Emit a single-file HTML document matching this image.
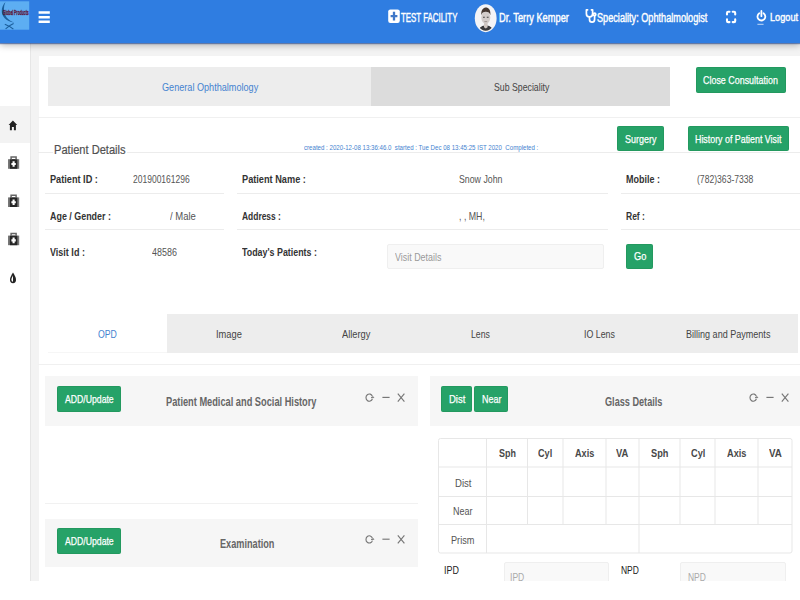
<!DOCTYPE html>
<html lang="en"><head><meta charset="utf-8"><title>Patient Consultation</title>
<style>
*{box-sizing:border-box;margin:0;padding:0}
html,body{width:800px;height:600px;overflow:hidden;background:#f3f3f3;font-family:"Liberation Sans",sans-serif}
.a{position:absolute}
.t{position:absolute;z-index:3;white-space:pre;line-height:1;transform-origin:0 50%;font-family:"Liberation Sans",sans-serif}
.hdr{left:0;top:0;width:800px;height:43px;background:#2f7de1;box-shadow:0 1px 1px rgba(20,60,140,.55),0 2px 7px rgba(0,0,0,.30);z-index:2}
.side{left:0;top:43px;width:30.5px;height:540px;background:#fff;border-right:1px solid #e6e6e6}
.side .act{left:0;top:63px;width:29.5px;height:37px;background:#f3f3f3}
.card{left:38.5px;top:55.5px;width:762px;height:530px;background:#fff}
.hl{height:1px;background:#ececec}
.btn{background:#26a268;border:1px solid #23995f;border-radius:1.5px}
.tab{background:#ededed}
.ph{background:#f6f6f6}
.inp{background:#f9f9f9;border:1px solid #efefef;border-radius:2px}
.cut{position:absolute;left:0;top:580.5px;width:800px;height:20px;background:#fff;z-index:5}
svg{position:absolute;overflow:visible}
.hw{-webkit-text-stroke:.4px #fff}
.bw{-webkit-text-stroke:.25px #fff}
.pd{-webkit-text-stroke:.2px #505050}

</style></head>
<body>
<div class="a side"><div class="a act"></div></div>
<div class="a card"></div>
<div class="a hdr"></div>

<!-- main tabs -->
<div class="a tab" style="left:48px;top:67px;width:323px;height:38.5px"></div>
<div class="a" style="left:371px;top:67px;width:299px;height:38.5px;background:#dcdcdc"></div>
<div class="a btn" style="left:695.5px;top:66.5px;width:90px;height:26px"></div>
<div class="a hl" style="left:38px;top:117px;width:762px;background:#f0f0f0"></div>

<!-- patient details -->
<div class="a btn" style="left:617px;top:125.5px;width:47px;height:25.5px"></div>
<div class="a btn" style="left:687.5px;top:125.5px;width:101.5px;height:25.5px"></div>
<div class="a hl" style="left:38px;top:152px;width:762px"></div>
<div class="a" style="left:52.5px;top:150px;width:74px;height:5px;background:#fff"></div>
<div class="a hl" style="left:45px;top:193px;width:179px"></div>
<div class="a hl" style="left:237px;top:193px;width:371px"></div>
<div class="a hl" style="left:621px;top:193px;width:179px"></div>
<div class="a hl" style="left:45px;top:229px;width:179px"></div>
<div class="a hl" style="left:237px;top:229px;width:371px"></div>
<div class="a hl" style="left:621px;top:229px;width:179px"></div>
<div class="a inp" style="left:387px;top:243.5px;width:217px;height:25.5px"></div>
<div class="a btn" style="left:625.5px;top:243.5px;width:27.5px;height:25.5px"></div>

<!-- section tabs -->
<div class="a tab" style="left:166.5px;top:314px;width:631px;height:38.5px"></div>
<div class="a hl" style="left:48px;top:352px;width:119px;background:#f6f6f6"></div>
<div class="a hl" style="left:38px;top:364px;width:762px;background:#f0f0f0"></div>

<!-- panels -->
<div class="a ph" style="left:44.5px;top:376px;width:373px;height:49.5px"></div>
<div class="a btn" style="left:57px;top:385.5px;width:64px;height:26.5px"></div>
<div class="a hl" style="left:44.5px;top:503px;width:373px;background:#f1f1f1"></div>
<div class="a ph" style="left:44.5px;top:518.5px;width:373px;height:48.5px"></div>
<div class="a btn" style="left:57px;top:527.5px;width:64px;height:26px"></div>

<div class="a ph" style="left:430px;top:376px;width:370px;height:49.5px"></div>
<div class="a btn" style="left:441px;top:385.5px;width:31px;height:26.5px"></div>
<div class="a btn" style="left:474px;top:385.5px;width:34px;height:26.5px"></div>

<!-- glass table grid -->
<svg class="ov" style="left:0;top:0;z-index:1" width="800" height="600" viewBox="0 0 800 600" fill="none" stroke="#e7e7e7" stroke-width="1">
<rect x="438.5" y="438.5" width="353.5" height="114.5" rx="2"/>
<path d="M438.5 467H792M438.5 496.5H792M438.5 524.5H792"/>
<path d="M486.5 438.5V553M639 438.5V553"/>
<path d="M527.5 438.5V524.5M563 438.5V524.5M606 438.5V524.5M680 438.5V524.5M715 438.5V524.5M758 438.5V524.5"/>
</svg>
<div class="a inp" style="left:503.5px;top:562px;width:105.5px;height:26px"></div>
<div class="a inp" style="left:680px;top:562px;width:105.5px;height:26px"></div>

<!-- icons -->
<svg class="ov" style="left:0;top:0;z-index:4" width="800" height="600" viewBox="0 0 800 600">
<!-- logo -->
<rect x="0" y="1.3" width="29.2" height="28.4" fill="#5daef2"/>
<path d="M5.4 2C-0.8 9 0 20 14.6 22.6C5.2 20 1.6 11 5.4 2Z" fill="#1b5f9c"/>
<path d="M4.8 24.2C8 25.4 11 27 13.4 29.2M13.6 23.6C10.6 25 8 26.6 5.6 28.8" stroke="#1b5f9c" stroke-width="1.1" fill="none"/>
<text x="2.8" y="14.6" font-family="Liberation Sans, sans-serif" font-weight="700" font-size="7" fill="#5e1638" stroke="#5e1638" stroke-width=".35" textLength="25.8" lengthAdjust="spacingAndGlyphs">Global Products</text>
<!-- hamburger -->
<path d="M38.6 12.6H49.8M38.6 17.2H49.8M38.6 21.8H49.8" stroke="#fff" stroke-width="2.5" fill="none"/>
<!-- plus square -->
<rect x="388.2" y="9.4" width="11.6" height="13.6" rx="2.2" fill="#fff"/>
<path d="M390.6 16.2H397.4M394 11.8V20.6" stroke="#3f78c8" stroke-width="2.3" fill="none"/>
<!-- avatar -->
<g>
<ellipse cx="485.7" cy="18.2" rx="10.9" ry="14" fill="#f4f4f6"/>
<clipPath id="av"><ellipse cx="485.7" cy="18.2" rx="9.6" ry="12.6"/></clipPath>
<g clip-path="url(#av)">
<path d="M478.5 33C478.5 27.2 482 25.6 485.8 25.6C489.6 25.6 493 27.2 493 33Z" fill="#3a3a3c"/>
<path d="M484 22.5H487.6V27.2L485.8 28.6L484 27.2Z" fill="#cfc6c2"/>
<ellipse cx="485.8" cy="17.6" rx="4.5" ry="6.2" fill="#d2ccca"/>
<path d="M481.2 15.2C481 9.6 483.6 7.6 485.9 7.6C488.4 7.6 490.8 9.6 490.4 15.2C489.6 12.6 488.2 11.8 485.8 11.8C483.4 11.8 482 12.6 481.2 15.2Z" fill="#453832"/>
<path d="M483 17.3H484.8M486.8 17.3H488.6" stroke="#444" stroke-width="1.1"/>
<path d="M484.4 21.6H487.2" stroke="#8a7f7c" stroke-width=".7"/>
</g>
</g>
<!-- stethoscope -->
<g stroke="#fff" fill="none" stroke-width="1.7" stroke-linecap="round" stroke-linejoin="round">
<path d="M587.6 9.8H586.4V13.8C586.4 18 592.6 18 592.6 13.8V9.8H591.4"/>
<path d="M589.5 17V19.2C589.5 23.2 594.6 23.2 594.6 19.2V16"/>
<circle cx="594.6" cy="14.4" r="1.2"/>
</g>
<!-- fullscreen -->
<path d="M727 14.4V12.9Q727 11.7 728.2 11.7H729.5M732.7 11.7H734Q735.2 11.7 735.2 12.9V14.4M735.2 19.4V20.9Q735.2 22.1 734 22.1H732.7M729.5 22.1H728.2Q727 22.1 727 20.9V19.4" stroke="#fff" stroke-width="2.1" fill="none" stroke-linecap="round"/>
<!-- power -->
<g stroke="#fff" fill="none" stroke-linecap="round">
<path d="M759.3 13.3A3.9 3.9 0 1 0 763.5 13.3" stroke-width="1.8"/>
<path d="M761.4 10.9V16.2" stroke-width="1.8"/>
<path d="M757.8 24.3H763.2" stroke-width="1" opacity=".7"/>
</g>
<!-- sidebar icons -->
<path d="M12.9 120.6L8.6 125H9.9V130.3H11.9V127H13.9V130.3H15.9V125H17.2Z" fill="#222"/>
<g id="mk">
<path d="M8 159.2H19.2V168.8H8Z" fill="#777"/>
<path d="M9.9 159.2H17.3V168.8H9.9Z" fill="#262626"/>
<path d="M11.1 159.4V157H16.1V159.4" stroke="#666" stroke-width="1.5" fill="none"/>
<path d="M13.6 161.2V166.8M11.4 164H15.8" stroke="#fff" stroke-width="2.1"/>
</g>
<use href="#mk" y="38.2"/>
<use href="#mk" y="76.4"/>
<g>
<path d="M13 272.6C11.2 275.6 10 277.6 10 279.8A3 3.4 0 0 0 16 279.8C16 277.6 14.8 275.6 13 272.6Z" fill="#222"/>
<path d="M13 275.4C12.2 277 11.4 278.4 11.4 279.8A1.6 2 0 0 0 13 281.8Z" fill="#fff"/>
</g>
<!-- panel tools -->
<g id="pt" stroke="#777" fill="none" stroke-width="1.15">
<path d="M372.4 396.4A3.3 3.6 0 1 0 372.4 398.8"/>
<path d="M371 397.6H373.8L372.6 396.2" stroke-width="1"/>
<path d="M382.4 397.4H389.6"/>
<path d="M397.8 393.6L404.4 401.6M404.4 393.6L397.8 401.6"/>
</g>
<use href="#pt" x="384"/>
<use href="#pt" y="141.8"/>
</svg>

<span class="t hw" style="left:401.2px;top:12.34px;font-size:12px;font-weight:400;color:#fff;transform:scaleX(0.6572)">TEST FACILITY</span>
<span class="t hw" style="left:498.7px;top:12.34px;font-size:12px;font-weight:400;color:#fff;transform:scaleX(0.7726)">Dr. Terry Kemper</span>
<span class="t hw" style="left:597.2px;top:12.14px;font-size:12px;font-weight:400;color:#fff;transform:scaleX(0.7627)">Speciality: Ophthalmologist</span>
<span class="t hw" style="left:769.7px;top:12.27px;font-size:11.5px;font-weight:400;color:#fff;transform:scaleX(0.7986)">Logout</span>
<span class="t " style="left:161.9px;top:81.57px;font-size:11.5px;font-weight:400;color:#4583d0;transform:scaleX(0.7920)">General Ophthalmology</span>
<span class="t " style="left:493.7px;top:81.57px;font-size:11.5px;font-weight:400;color:#444;transform:scaleX(0.7602)">Sub Speciality</span>
<span class="t pd" style="left:53.9px;top:142.70px;font-size:13.7px;font-weight:400;color:#505050;transform:scaleX(0.8112)">Patient Details</span>
<span class="t " style="left:303.7px;top:143.85px;font-size:7.5px;font-weight:400;color:#4583d0;transform:scaleX(0.8160)">created : 2020-12-08 13:36:46.0&nbsp; started : Tue Dec 08 13:45:25 IST 2020&nbsp; Completed :</span>
<span class="t bw" style="left:702.7px;top:75.45px;font-size:11.4px;font-weight:400;color:#fff;transform:scaleX(0.7834)">Close Consultation</span>
<span class="t bw" style="left:624.7px;top:134.05px;font-size:11.4px;font-weight:400;color:#fff;transform:scaleX(0.7872)">Surgery</span>
<span class="t bw" style="left:695.2px;top:134.05px;font-size:11.4px;font-weight:400;color:#fff;transform:scaleX(0.7768)">History of Patient Visit</span>
<span class="t " style="left:49.7px;top:174.37px;font-size:11.5px;font-weight:700;color:#333;transform:scaleX(0.7975)">Patient ID :</span>
<span class="t " style="left:133.3px;top:174.37px;font-size:11.5px;font-weight:400;color:#555;transform:scaleX(0.7388)">201900161296</span>
<span class="t " style="left:241.7px;top:174.37px;font-size:11.5px;font-weight:700;color:#333;transform:scaleX(0.7998)">Patient Name :</span>
<span class="t " style="left:459.2px;top:174.37px;font-size:11.5px;font-weight:400;color:#555;transform:scaleX(0.7627)">Snow John</span>
<span class="t " style="left:625.7px;top:174.37px;font-size:11.5px;font-weight:700;color:#333;transform:scaleX(0.7802)">Mobile :</span>
<span class="t " style="left:697.2px;top:174.37px;font-size:11.5px;font-weight:400;color:#555;transform:scaleX(0.7475)">(782)363-7338</span>
<span class="t " style="left:49.7px;top:210.57px;font-size:11.5px;font-weight:700;color:#333;transform:scaleX(0.7747)">Age / Gender :</span>
<span class="t " style="left:169.7px;top:210.57px;font-size:11.5px;font-weight:400;color:#555;transform:scaleX(0.8267)">/ Male</span>
<span class="t " style="left:241.7px;top:210.57px;font-size:11.5px;font-weight:700;color:#333;transform:scaleX(0.7333)">Address :</span>
<span class="t " style="left:458.7px;top:210.57px;font-size:11.5px;font-weight:400;color:#555;transform:scaleX(0.7646)">, , MH,</span>
<span class="t " style="left:625.7px;top:210.57px;font-size:11.5px;font-weight:700;color:#333;transform:scaleX(0.7394)">Ref :</span>
<span class="t " style="left:49.7px;top:246.77px;font-size:11.5px;font-weight:700;color:#333;transform:scaleX(0.7837)">Visit Id :</span>
<span class="t " style="left:151.7px;top:246.77px;font-size:11.5px;font-weight:400;color:#555;transform:scaleX(0.7785)">48586</span>
<span class="t " style="left:241.7px;top:246.77px;font-size:11.5px;font-weight:700;color:#333;transform:scaleX(0.7713)">Today's Patients :</span>
<span class="t " style="left:394.7px;top:251.97px;font-size:11.5px;font-weight:400;color:#9a9a9a;transform:scaleX(0.7749)">Visit Details</span>
<span class="t bw" style="left:633.7px;top:251.05px;font-size:11.4px;font-weight:400;color:#fff;transform:scaleX(0.8156)">Go</span>
<span class="t " style="left:97.7px;top:329.13px;font-size:11.3px;font-weight:400;color:#4583d0;transform:scaleX(0.7719)">OPD</span>
<span class="t " style="left:215.7px;top:329.13px;font-size:11.3px;font-weight:400;color:#444;transform:scaleX(0.8247)">Image</span>
<span class="t " style="left:342.2px;top:329.13px;font-size:11.3px;font-weight:400;color:#444;transform:scaleX(0.8224)">Allergy</span>
<span class="t " style="left:470.7px;top:329.13px;font-size:11.3px;font-weight:400;color:#444;transform:scaleX(0.7714)">Lens</span>
<span class="t " style="left:583.7px;top:329.13px;font-size:11.3px;font-weight:400;color:#444;transform:scaleX(0.7810)">IO Lens</span>
<span class="t " style="left:685.7px;top:329.13px;font-size:11.3px;font-weight:400;color:#444;transform:scaleX(0.8000)">Billing and Payments</span>
<span class="t bw" style="left:64.7px;top:394.22px;font-size:11.2px;font-weight:400;color:#fff;transform:scaleX(0.7753)">ADD/Update</span>
<span class="t " style="left:165.7px;top:394.96px;font-size:13.4px;font-weight:700;color:#666;transform:scaleX(0.6903)">Patient Medical and Social History</span>
<span class="t bw" style="left:448.7px;top:394.22px;font-size:11.2px;font-weight:400;color:#fff;transform:scaleX(0.8506)">Dist</span>
<span class="t bw" style="left:481.7px;top:394.22px;font-size:11.2px;font-weight:400;color:#fff;transform:scaleX(0.8000)">Near</span>
<span class="t " style="left:605.2px;top:394.96px;font-size:13.4px;font-weight:700;color:#666;transform:scaleX(0.6823)">Glass Details</span>
<span class="t bw" style="left:64.7px;top:536.02px;font-size:11.2px;font-weight:400;color:#fff;transform:scaleX(0.7753)">ADD/Update</span>
<span class="t " style="left:219.7px;top:536.76px;font-size:13.4px;font-weight:700;color:#666;transform:scaleX(0.6832)">Examination</span>
<span class="t " style="left:498.7px;top:448.27px;font-size:11.5px;font-weight:700;color:#484848;transform:scaleX(0.7776)">Sph</span>
<span class="t " style="left:538px;top:448.27px;font-size:11.5px;font-weight:700;color:#484848;transform:scaleX(0.7930)">Cyl</span>
<span class="t " style="left:574.7px;top:448.27px;font-size:11.5px;font-weight:700;color:#484848;transform:scaleX(0.7943)">Axis</span>
<span class="t " style="left:616.2px;top:448.27px;font-size:11.5px;font-weight:700;color:#484848;transform:scaleX(0.8198)">VA</span>
<span class="t " style="left:650.7px;top:448.27px;font-size:11.5px;font-weight:700;color:#484848;transform:scaleX(0.8006)">Sph</span>
<span class="t " style="left:690.7px;top:448.27px;font-size:11.5px;font-weight:700;color:#484848;transform:scaleX(0.7986)">Cyl</span>
<span class="t " style="left:727.2px;top:448.27px;font-size:11.5px;font-weight:700;color:#484848;transform:scaleX(0.7985)">Axis</span>
<span class="t " style="left:768.7px;top:448.27px;font-size:11.5px;font-weight:700;color:#484848;transform:scaleX(0.8529)">VA</span>
<span class="t " style="left:454.7px;top:477.93px;font-size:11.3px;font-weight:400;color:#555;transform:scaleX(0.8475)">Dist</span>
<span class="t " style="left:452.7px;top:506.43px;font-size:11.3px;font-weight:400;color:#555;transform:scaleX(0.7959)">Near</span>
<span class="t " style="left:451.2px;top:534.93px;font-size:11.3px;font-weight:400;color:#555;transform:scaleX(0.8104)">Prism</span>
<span class="t " style="left:443.7px;top:564.57px;font-size:11.5px;font-weight:400;color:#222;transform:scaleX(0.7772)">IPD</span>
<span class="t " style="left:620.7px;top:564.57px;font-size:11.5px;font-weight:400;color:#222;transform:scaleX(0.7372)">NPD</span>
<span class="t " style="left:510.3px;top:571.97px;font-size:11.5px;font-weight:400;color:#aaa;transform:scaleX(0.7459)">IPD</span>
<span class="t " style="left:687.7px;top:571.97px;font-size:11.5px;font-weight:400;color:#aaa;transform:scaleX(0.7372)">NPD</span>
<div class="cut"></div>
</body></html>
